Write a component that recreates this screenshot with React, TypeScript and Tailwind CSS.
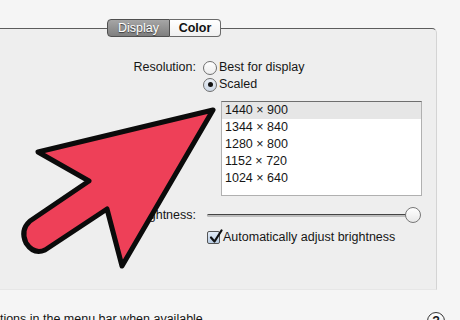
import { Fragment } from "react";

const RESOLUTIONS = ["1440 × 900", "1344 × 840", "1280 × 800", "1152 × 720", "1024 × 640"];

function Radio({ checked }: { checked?: boolean }) {
  return (
    <span
      className={`flex h-[14px] w-[14px] items-center justify-center rounded-full border border-[#6f6f6f] ${
        checked ? "bg-gradient-to-b from-[#e9eef5] to-[#cdd8e6]" : "bg-gradient-to-b from-white to-[#ececec]"
      }`}
    >
      {checked && <span className="h-[5px] w-[5px] rounded-full bg-[#111]" />}
    </span>
  );
}

function Checkbox() {
  return (
    <span className="relative flex h-[13px] w-[13px] items-center justify-center rounded-[2px] border border-[#555] bg-gradient-to-b from-[#e3ecf7] to-[#b9cde4]">
      <svg viewBox="0 0 14 14" className="absolute -top-[3px] left-[1px] h-[15px] w-[14px]">
        <path d="M2 8 L5.5 12 L12.5 1" fill="none" stroke="#111" strokeWidth="2.2" strokeLinecap="round" strokeLinejoin="round" />
      </svg>
    </span>
  );
}

function Arrow() {
  return (
    <svg viewBox="0 0 460 320" className="pointer-events-none absolute inset-0 h-[320px] w-[460px]">
      <path
        d="M213 110 L38 152 L89 181 L30 221 Q20 230 26 243 Q34 255 45 250 L107 209 L122 266 Z"
        fill="#ee4058"
        stroke="#0b0b0b"
        strokeWidth="5"
        strokeLinejoin="round"
      />
    </svg>
  );
}

export default function App() {
  return (
    <div className="relative h-[320px] w-[460px] overflow-hidden bg-[#f5f5f5] font-['Liberation_Sans',Arial,sans-serif] text-[12.5px] leading-none text-[#161616]">
      <div className="ml-[-10px] mt-[28px] h-[262px] w-[447px] rounded-tr-[5px] border-r border-t border-b border-r-[#d4d4d4] border-t-[#5c5c5c] border-b-[#e6e6e6] bg-[#eeeeee]">
        {/* segmented tabs */}
        <div className="ml-[117px] mt-[-10px] flex h-[18px] w-[114px]">
          <div className="flex w-[63px] items-center justify-center rounded-l-[4px] border border-[#4f4f4f] bg-gradient-to-b from-[#a6a6a6] to-[#7f7f7f] text-white [text-shadow:0_1px_1px_#3a3a3a]">
            Display
          </div>
          <div className="flex w-[51px] items-center justify-center rounded-r-[4px] border border-l-0 border-[#6a6a6a] bg-gradient-to-b from-white to-[#f0f0f0] font-bold text-[#111]">
            Color
          </div>
        </div>

        <div className="mt-[22px] grid grid-cols-[206px_1fr] gap-x-[7px]">
          <div className="flex h-[17px] items-center justify-end">Resolution:</div>
          <div className="flex h-[17px] items-center gap-[2px]">
            <Radio />
            <span>Best for display</span>
          </div>
          <div />
          <div className="flex h-[17px] items-center gap-[2px]">
            <Radio checked />
            <span>Scaled</span>
          </div>
          <div />
          <div className="ml-[18px] mt-[8px] h-[95px] w-[201px] border border-[#b0b0b0] border-t-[#6e6e6e] bg-white">
            {RESOLUTIONS.map((r, i) => (
              <div
                key={r}
                className={`flex h-[17px] items-center pl-[3px] ${i === 0 ? "bg-[#e6e6e6]" : ""}`}
              >
                {r}
              </div>
            ))}
          </div>
          <div className="mt-[11px] flex h-[16px] items-center justify-end">Brightness:</div>
          <div className="mt-[11px] flex h-[16px] items-center pl-[4px]">
            <div className="relative h-[3px] w-[207px] rounded-full border-t border-[#444] bg-[#bdbdbd]">
              <span className="absolute right-[-7px] top-[-8px] h-[16px] w-[16px] rounded-full border border-[#777] bg-gradient-to-b from-white to-[#e8e8e8]" />
            </div>
          </div>
          <div />
          <div className="mt-[6px] flex h-[16px] items-center gap-[3px] pl-[4px]">
            <Checkbox />
            <span>Automatically adjust brightness</span>
          </div>
        </div>
      </div>

      <div className="mt-[21px] flex items-start justify-between pr-[15px]">
        <span className="ml-[-14px] leading-[16px]">options in the menu bar when available</span>
        <span className="mt-[1px] flex h-[18px] w-[18px] items-center justify-center rounded-full border-[1.5px] border-[#333] bg-gradient-to-b from-white to-[#e6e6e6] font-bold">
          ?
        </span>
      </div>

      <Arrow />
    </div>
  );
}
